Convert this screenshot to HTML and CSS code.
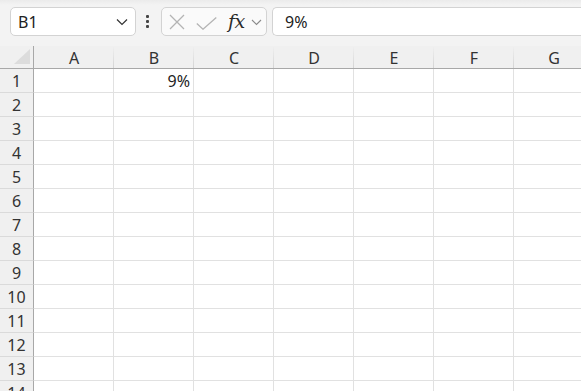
FILE: index.html
```html
<!DOCTYPE html>
<html>
<head>
<meta charset="utf-8">
<link rel="stylesheet" href="styles.css">
</head>
<body>
<div class="app">
  <div class="toolbar">
    <div class="namebox">
      <span class="name">B1</span>
      <svg class="chev" width="12" height="8" viewBox="0 0 12 8"><path d="M1 1.5 L6 6.5 L11 1.5" fill="none" stroke="#333" stroke-width="1.2"/></svg>
    </div>
    <div class="dots"><span></span><span></span><span></span></div>
    <div class="fbtns">
      <svg class="ico-x" width="16" height="16" viewBox="0 0 16 16"><path d="M1 1 L15 15 M15 1 L1 15" stroke="#b4b4b4" stroke-width="1.3" fill="none"/></svg>
      <svg class="ico-ok" width="21" height="13" viewBox="0 0 21 13"><path d="M0.8 6.5 L7 12.2 L20.3 0.6" stroke="#b4b4b4" stroke-width="1.3" fill="none"/></svg>
      <span class="fx">fx</span>
      <svg class="chev-s" width="11" height="7" viewBox="0 0 11 7"><path d="M1 1 L5.5 5.5 L10 1" fill="none" stroke="#8a8a8a" stroke-width="1.1"/></svg>
    </div>
    <div class="finput">9%</div>
  </div>
  <div class="grid">
    <div class="corner"><span class="tri"></span></div>
    <div class="ch">A</div><div class="ch">B</div><div class="ch">C</div><div class="ch">D</div><div class="ch">E</div><div class="ch">F</div><div class="ch">G</div>

    <div class="rh">1</div><div class="c"></div><div class="c num">9%</div><div class="c"></div><div class="c"></div><div class="c"></div><div class="c"></div><div class="c"></div>
    <div class="rh">2</div><div class="c"></div><div class="c"></div><div class="c"></div><div class="c"></div><div class="c"></div><div class="c"></div><div class="c"></div>
    <div class="rh">3</div><div class="c"></div><div class="c"></div><div class="c"></div><div class="c"></div><div class="c"></div><div class="c"></div><div class="c"></div>
    <div class="rh">4</div><div class="c"></div><div class="c"></div><div class="c"></div><div class="c"></div><div class="c"></div><div class="c"></div><div class="c"></div>
    <div class="rh">5</div><div class="c"></div><div class="c"></div><div class="c"></div><div class="c"></div><div class="c"></div><div class="c"></div><div class="c"></div>
    <div class="rh">6</div><div class="c"></div><div class="c"></div><div class="c"></div><div class="c"></div><div class="c"></div><div class="c"></div><div class="c"></div>
    <div class="rh">7</div><div class="c"></div><div class="c"></div><div class="c"></div><div class="c"></div><div class="c"></div><div class="c"></div><div class="c"></div>
    <div class="rh">8</div><div class="c"></div><div class="c"></div><div class="c"></div><div class="c"></div><div class="c"></div><div class="c"></div><div class="c"></div>
    <div class="rh">9</div><div class="c"></div><div class="c"></div><div class="c"></div><div class="c"></div><div class="c"></div><div class="c"></div><div class="c"></div>
    <div class="rh">10</div><div class="c"></div><div class="c"></div><div class="c"></div><div class="c"></div><div class="c"></div><div class="c"></div><div class="c"></div>
    <div class="rh">11</div><div class="c"></div><div class="c"></div><div class="c"></div><div class="c"></div><div class="c"></div><div class="c"></div><div class="c"></div>
    <div class="rh">12</div><div class="c"></div><div class="c"></div><div class="c"></div><div class="c"></div><div class="c"></div><div class="c"></div><div class="c"></div>
    <div class="rh">13</div><div class="c"></div><div class="c"></div><div class="c"></div><div class="c"></div><div class="c"></div><div class="c"></div><div class="c"></div>
    <div class="rh">14</div><div class="c"></div><div class="c"></div><div class="c"></div><div class="c"></div><div class="c"></div><div class="c"></div><div class="c"></div>
  </div>
</div>
</body>
</html>
```

FILE: styles.css
```css
html, body {
  margin: 0;
  padding: 0;
  width: 581px;
  height: 391px;
  overflow: hidden;
  background: #ffffff;
  font-family: "Noto Sans", "Open Sans", sans-serif;
}

.app {
  width: 581px;
  height: 391px;
  overflow: hidden;
}

.toolbar {
  height: 46px;
  background: linear-gradient(to bottom, #ebebeb 0px, #f3f3f3 5px, #f3f3f3 100%);
  display: flex;
  align-items: flex-start;
  padding-top: 7px;
  box-sizing: border-box;
}

.namebox {
  margin-left: 10px;
  width: 126px;
  height: 29px;
  box-sizing: border-box;
  border: 1px solid #d3d3d3;
  border-radius: 5px;
  background: #ffffff;
  display: flex;
  align-items: center;
  justify-content: space-between;
  padding: 0 7px 0 7px;
}

.name {
  font-size: 16px;
  color: #222;
  line-height: 1;
}

.chev { display: block; }

.dots {
  width: 4px;
  margin-left: 10px;
  margin-right: 11px;
  height: 29px;
  display: flex;
  flex-direction: column;
  justify-content: center;
  gap: 2px;
}
.dots span {
  width: 3px;
  height: 3px;
  background: #444;
  border-radius: 1px;
}

.fbtns {
  width: 106px;
  height: 29px;
  box-sizing: border-box;
  border: 1px solid #d3d3d3;
  border-radius: 5px;
  background: #fafafa;
  display: flex;
  align-items: center;
  padding-left: 7px;
}

.ico-x { display: block; margin-right: 11px; margin-top: 1px; }
.ico-ok { display: block; margin-right: 11px; margin-top: 3px; }

.fx {
  font-family: "DejaVu Serif", "Liberation Serif", serif;
  font-style: italic;
  font-weight: normal;
  font-size: 19px;
  color: #2b2b2b;
  line-height: 1;
  margin-top: -1px;
  letter-spacing: -0.5px;
}

.chev-s { display: block; margin-left: 6px; margin-top: 1px; }

.finput {
  margin-left: 5px;
  flex: 1;
  height: 29px;
  box-sizing: border-box;
  border: 1px solid #d3d3d3;
  border-right: none;
  border-radius: 5px 0 0 5px;
  background: #ffffff;
  font-size: 16px;
  color: #222;
  display: flex;
  align-items: center;
  padding-left: 12px;
}

.grid {
  display: grid;
  grid-template-columns: 34px repeat(7, 80px);
  grid-template-rows: 23px;
  grid-auto-rows: 24px;
  width: 594px;
}

.corner {
  background: #f0f0f0;
  border-right: 1px solid #a8a8a8;
  border-bottom: 1px solid #a8a8a8;
  position: relative;
}
.tri {
  position: absolute;
  right: 3px;
  bottom: 4px;
  width: 0;
  height: 0;
  border-left: 16px solid transparent;
  border-bottom: 15px solid #dcdcdc;
}

.ch {
  background: #f0f0f0 linear-gradient(to bottom, #f0f0f0, #d4d4d4) no-repeat right top / 1px 100%;
  border-bottom: 1px solid #a8a8a8;
  font-size: 16px;
  color: #333;
  display: flex;
  align-items: center;
  justify-content: center;
  line-height: 1;
  padding-top: 1px;
  box-sizing: border-box;
}

.rh {
  background: #f0f0f0;
  border-right: 1px solid #a8a8a8;
  border-bottom: 1px solid #dadada;
  font-size: 16px;
  color: #333;
  display: flex;
  align-items: center;
  justify-content: center;
  line-height: 1;
}

.c {
  border-right: 1px solid #e1e1e1;
  border-bottom: 1px solid #e1e1e1;
  background: #ffffff;
}

.c.num {
  font-size: 16px;
  color: #222;
  display: flex;
  align-items: center;
  justify-content: flex-end;
  padding-right: 3px;
  line-height: 1;
}
```
